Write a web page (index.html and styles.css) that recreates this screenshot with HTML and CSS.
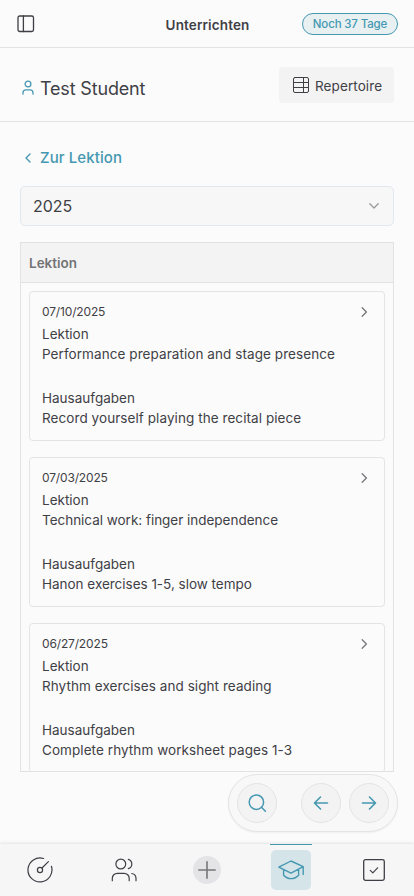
FILE: index.html
```html
<!DOCTYPE html>
<html lang="de">
<head>
<meta charset="utf-8">
<meta name="viewport" content="width=device-width, initial-scale=1">
<title>Unterrichten</title>
<link rel="stylesheet" href="styles.css">
</head>
<body>
<div class="app">
  <header class="topbar">
    <svg class="icon" width="18" height="18" viewBox="0 0 18 18"><rect x="1" y="1" width="15.5" height="15.5" rx="1.7" stroke-width="1.3"/><path d="M6.4 1v15.5" stroke-width="1.3"/></svg>
    <h1 class="topbar-title">Unterrichten</h1>
    <span class="trial">Noch 37 Tage</span>
  </header>
  <section class="student">
    <svg class="icon accent student-icon" width="12" height="16" viewBox="0 0 12 16"><circle cx="6" cy="4" r="2.9" stroke-width="1.3"/><path d="M1 14.2v-1.4a3 3 0 0 1 3-3h4a3 3 0 0 1 3 3v1.4" stroke-width="1.3"/></svg>
    <h2 class="student-name">Test Student</h2>
    <button class="repertoire"><svg class="icon" width="16" height="16" viewBox="0 0 16 16"><rect x=".5" y=".5" width="15" height="15" rx="1.5"/><path d="M.5 5.5h15M.5 10.5h15M10.5.5v15"/></svg><span>Repertoire</span></button>
  </section>
  <main class="content">
    <a class="back"><svg class="icon accent" width="6" height="10" viewBox="0 0 6 10"><path d="M5 1 1 5l4 4" stroke-width="1.4"/></svg><span>Zur Lektion</span></a>
    <div class="select"><span>2025</span><svg class="icon muted" width="10" height="6" viewBox="0 0 10 6"><path d="m.8.8 4.2 4.2L9.2.8" stroke-width="1.3"/></svg></div>
    <div class="table">
      <div class="table-head">Lektion</div>
      <div class="list">
        <article class="card">
          <div class="card-top"><time>07/10/2025</time><svg class="icon chevron" width="7" height="10" viewBox="0 0 7 10"><path d="m1.2.8 4.2 4.2-4.2 4.2" stroke-width="1.3"/></svg></div>
          <p class="label">Lektion</p><p>Performance preparation and stage presence</p>
          <p class="label homework">Hausaufgaben</p><p>Record yourself playing the recital piece</p>
        </article>
        <article class="card">
          <div class="card-top"><time>07/03/2025</time><svg class="icon chevron" width="7" height="10" viewBox="0 0 7 10"><path d="m1.2.8 4.2 4.2-4.2 4.2" stroke-width="1.3"/></svg></div>
          <p class="label">Lektion</p><p class="narrow">Technical work: finger independence</p>
          <p class="label homework">Hausaufgaben</p><p class="narrow">Hanon exercises 1-5, slow tempo</p>
        </article>
        <article class="card">
          <div class="card-top"><time>06/27/2025</time><svg class="icon chevron" width="7" height="10" viewBox="0 0 7 10"><path d="m1.2.8 4.2 4.2-4.2 4.2" stroke-width="1.3"/></svg></div>
          <p class="label">Lektion</p><p>Rhythm exercises and sight reading</p>
          <p class="label homework">Hausaufgaben</p><p>Complete rhythm worksheet pages 1-3</p>
        </article>
      </div>
    </div>
  </main>
  <div class="pager">
    <button class="round search"><svg class="icon accent" width="20" height="20" viewBox="0 0 20 20"><circle cx="9.4" cy="9.2" r="7.2" stroke-width="1.5"/><path d="m14.5 14.3 3.9 3.9" stroke-width="1.5"/></svg></button>
    <button class="round"><svg class="icon accent" width="16" height="14" viewBox="0 0 16 14"><path d="M14.5 7h-13M7.5 1l-6 6 6 6" stroke-width="1.6"/></svg></button>
    <button class="round"><svg class="icon accent" width="16" height="14" viewBox="0 0 16 14"><path d="M1.5 7h13M8.5 1l6 6-6 6" stroke-width="1.6"/></svg></button>
  </div>
  <nav class="nav">
    <a class="nav-item"><svg class="icon" width="26" height="26" viewBox="0 0 26 26"><path d="M16.6 1.5A12 12 0 1 0 24.4 9.3M15 11l6.4-6.4" stroke-width="1.2"/><circle cx="13" cy="13" r="2.6" stroke-width="1.2"/></svg></a>
    <a class="nav-item"><svg class="icon" width="26" height="26" viewBox="0 0 26 26"><circle cx="9.8" cy="7" r="4.9" stroke-width="1.2"/><path d="M1.3 23.7v-2.4a5 5 0 0 1 5-5h6.9a5 5 0 0 1 5 5v2.4M17.3 2.3a4.9 4.9 0 0 1 0 9.4M20.8 16.5a5 5 0 0 1 4.2 5v2.2" stroke-width="1.2"/></svg></a>
    <a class="nav-item"><span class="add"><svg class="icon plus" width="18" height="18" viewBox="0 0 18 18"><path d="M9 .8v16.4M.8 9h16.4" stroke-width="1.6"/></svg></span></a>
    <a class="nav-item active"><span class="tile"><svg class="icon accent" width="28" height="22" viewBox="0 0 28 22"><path d="M1.8 8.2 14 2l12.2 5.6L14 14.2 1.8 8.2ZM6.6 10.8v5.4c4 4.5 11 4.5 15 0v-5.4M26.2 7.6v7.8" stroke-width="1.4"/></svg></span></a>
    <a class="nav-item"><svg class="icon" width="22" height="22" viewBox="0 0 22 22"><rect x=".7" y=".7" width="20.6" height="20.6" rx="1.8" stroke-width="1.3"/><path d="m7.3 11.3 2.5 2.5 4.8-5" stroke-width="1.2"/></svg></a>
  </nav>
</div>
</body>
</html>
```
FILE: styles.css
```css
* { box-sizing: border-box; }
body { margin: 0; background: #fbfbfb; color: #3f3f46; font: 13.5px/20px Inter, "Liberation Sans", sans-serif; }
h1, h2, p { margin: 0; }
p { letter-spacing: 0.07px; }
button { border: 0; padding: 0; font: inherit; color: inherit; }
.icon { display: block; flex: none; fill: none; stroke: #3f3f46; stroke-linecap: round; stroke-linejoin: round; }
.icon.accent { stroke: #4598b1; }
.icon.muted { stroke: #999; }
.icon.chevron { stroke: #77777c; }
.icon.plus { stroke: #77777a; }
.app { width: 414px; height: 896px; display: flex; flex-direction: column; overflow: hidden; position: relative; }
.topbar { height: 48px; flex: none; display: grid; grid-template-columns: 1fr auto 1fr; align-items: center; padding: 0 16px 0 17px; border-bottom: 1px solid #e4e4e7; }
.topbar-title { font-size: 13.5px; font-weight: 600; line-height: 20px; padding-top: 3px; letter-spacing: 0.12px; }
.trial { justify-self: end; width: 96px; height: 22px; border: 1px solid #4598b1; border-radius: 11px; background: #e8f0f2; color: #4598b1; font-size: 11.5px; line-height: 20px; text-align: center; font-weight: 500; letter-spacing: -0.15px; }
.student { height: 74px; flex: none; display: flex; align-items: center; padding: 0 20px 0 22px; border-bottom: 1px solid #e4e4e7; }
.student-icon { margin: 6px 6px 0 0; }
.student-name { font-size: 18px; font-weight: 400; line-height: 24px; margin-top: 9px; letter-spacing: -0.17px; }
.repertoire { margin-left: auto; width: 115px; height: 36px; border-radius: 4px; background: #f3f3f3; display: flex; align-items: center; gap: 6px; padding-left: 14px; }
.repertoire span { padding-top: 2px; letter-spacing: 0.1px; }
.content { padding: 26px 20px 0; display: flex; flex-direction: column; }
.back { display: flex; align-items: center; gap: 9px; height: 20px; padding-left: 5px; color: #4598b1; font-size: 15px; font-weight: 500; letter-spacing: 0.09px; }
.select { margin-top: 18px; height: 40px; border: 1px solid #e2e8f0; border-radius: 5px; background: #f7f7f7; display: flex; align-items: center; justify-content: space-between; padding: 0 14px 0 12px; font-size: 16px; }
.table { margin-top: 16px; height: 530px; border: 1px solid #e2e2e4; overflow: hidden; }
.table-head { height: 40px; background: #f3f3f3; border-bottom: 1px solid #e2e2e4; padding: 0 8px; font-weight: 600; line-height: 41px; color: #737377; }
.list { padding: 8px; display: flex; flex-direction: column; gap: 16px; }
.card { height: 150px; flex: none; border: 1px solid #e4e4e5; border-radius: 4px; padding: 9px 12px; white-space: nowrap; }
.card-top { height: 22px; margin-bottom: 1px; display: flex; align-items: center; justify-content: space-between; padding-right: 4px; font-size: 12px; letter-spacing: -0.15px; }
.label { letter-spacing: 0; }
.narrow { letter-spacing: -0.02px; }
.homework { margin-top: 24px; }
.pager { position: absolute; left: 228px; top: 774px; width: 170px; height: 58px; border: 1px solid #e4e4e5; border-radius: 29px; background: #f8f8f8; box-shadow: 0 1px 2px #0000000d; display: flex; align-items: center; gap: 8px; padding-left: 8px; }
.round { width: 40px; height: 40px; border: 1px solid #e4e4e5; border-radius: 50%; background: #f3f3f3; display: grid; place-items: center; }
.search { margin-right: 16px; }
.nav { margin-top: auto; height: 52px; flex: none; background: #f6f6f6; box-shadow: 0 -1px 3px #0000001a; display: flex; justify-content: space-between; padding: 0 19px; }
.nav-item { width: 42px; display: grid; place-items: center; }
.add { width: 28px; height: 28px; border-radius: 50%; background: #e4e4e7; display: grid; place-items: center; }
.active { border-top: 1px solid #4598b1; padding-bottom: 1px; }
.tile { width: 40px; height: 40px; border-radius: 5px; background: #d5e4e9; display: grid; place-items: center; }
```
